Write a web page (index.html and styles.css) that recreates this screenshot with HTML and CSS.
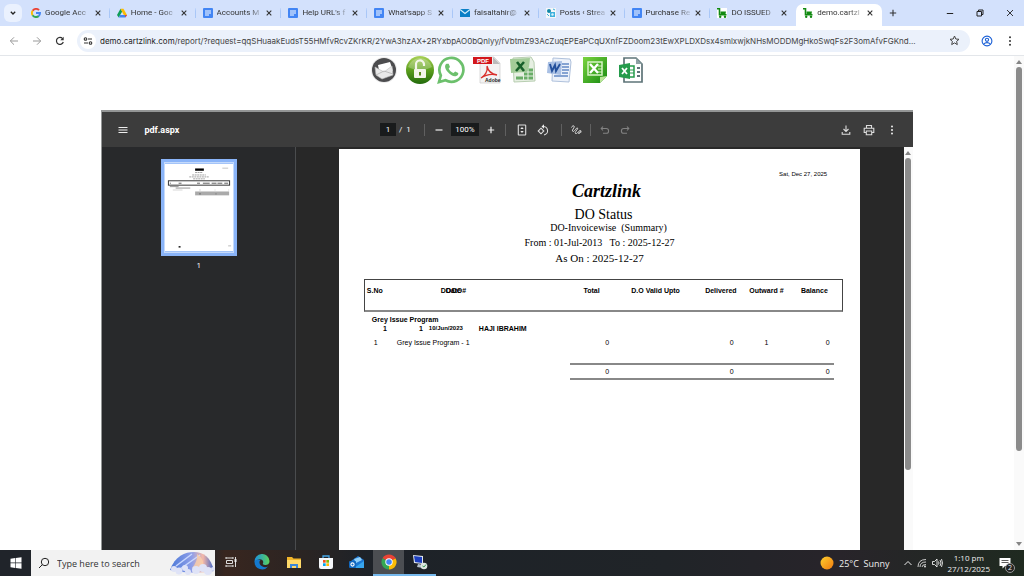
FILE: index.html
```html
<!DOCTYPE html>
<html lang="en">
<head>
<meta charset="utf-8">
<title>demo.cartzlink.com</title>
<link rel="stylesheet" href="styles.css">
</head>
<body>
<svg class="defs" aria-hidden="true">
  <defs>
    <linearGradient id="green" x1="0" y1="0" x2="0" y2="1"><stop offset="0" stop-color="#a9d157"/><stop offset=".5" stop-color="#5d9f1e"/><stop offset="1" stop-color="#226b0c"/></linearGradient>
    <linearGradient id="sheetgreen" x1="0" y1="0" x2="1" y2="1"><stop offset="0" stop-color="#7bd43f"/><stop offset="1" stop-color="#178a12"/></linearGradient>
    <linearGradient id="sky" x1="0" y1="0" x2="1" y2="0"><stop offset="0" stop-color="#4a78d8"/><stop offset=".5" stop-color="#8f9fe8"/><stop offset=".75" stop-color="#f4b8a8"/><stop offset="1" stop-color="#3b62c8"/></linearGradient>
    <linearGradient id="sun" x1="0" y1="0" x2="1" y2="1"><stop offset="0" stop-color="#ffd02e"/><stop offset="1" stop-color="#f07a10"/></linearGradient>
    <linearGradient id="edge" x1="0" y1="0" x2="1" y2="0"><stop offset="0" stop-color="#1b8fdd"/><stop offset="1" stop-color="#5bd35b"/></linearGradient>
    <symbol id="doc" viewBox="0 0 10 10"><rect width="10" height="10" rx="1" fill="#4285f4"/><path d="M2 3h6M2 5h6M2 7h4" stroke="#fff"/></symbol>
    <symbol id="cart" viewBox="0 0 10 10"><path d="M0 .8h2.500v6h7" fill="none" stroke="#128a12" stroke-width="1.600"/><path d="M3.500 3.500h5.500L8.500 6h-5z" fill="#128a12"/><circle cx="3.200" cy="8.800" r="1.200" fill="#128a12"/><circle cx="8" cy="8.800" r="1.200" fill="#128a12"/></symbol>
    <symbol id="x" viewBox="0 0 8 8"><path d="M1.700 1.700l4.600 4.600M6.300 1.700L1.700 6.300" stroke="#333" stroke-width="1.100"/></symbol>
  </defs>
</svg>

<header class="browser">
  <div class="tabstrip">
    <button class="tab-search" aria-label="Search tabs"><svg width="8" height="8" viewBox="0 0 8 8"><path d="M1.800 2.800L4 5l2.200-2.200" fill="none" stroke="#222" stroke-width="1.300"/></svg></button>
    <nav class="tabs" aria-label="Tabs">
      <div class="tab"><svg class="fav" viewBox="0 0 10 10"><g fill="none" stroke-width="1.900"><path d="M1.600 2.800A4 4 0 0 1 8 2.200" stroke="#ea4335"/><path d="M1.600 7.200a4 4 0 0 1 0-4.400" stroke="#fbbc05"/><path d="M7.700 8A4 4 0 0 1 1.600 7.200" stroke="#34a853"/><path d="M5 5h4a4 4 0 0 1-1.400 3.100" stroke="#4285f4"/></g></svg><a href="#" class="label">Google Acc</a><button class="close" aria-label="Close tab"><svg viewBox="0 0 8 8"><use href="#x"/></svg></button></div>
      <div class="tab"><svg class="fav" viewBox="0 0 10 10"><path d="M3.500 .8L0 7l1.700 2.500L5.200 3.600z" fill="#0f9d58"/><path d="M3.500 .8h3L10 7H6.800z" fill="#fbbc05"/><path d="M3.200 7H10L8.400 9.500H1.700z" fill="#4285f4"/><path d="M8 7h2L8.400 9.500z" fill="#ea4335"/></svg><a href="#" class="label">Home - Goc</a><button class="close" aria-label="Close tab"><svg viewBox="0 0 8 8"><use href="#x"/></svg></button></div>
      <div class="tab"><svg class="fav" viewBox="0 0 10 10"><use href="#doc"/></svg><a href="#" class="label">Accounts M</a><button class="close" aria-label="Close tab"><svg viewBox="0 0 8 8"><use href="#x"/></svg></button></div>
      <div class="tab"><svg class="fav" viewBox="0 0 10 10"><use href="#doc"/></svg><a href="#" class="label">Help URL's f</a><button class="close" aria-label="Close tab"><svg viewBox="0 0 8 8"><use href="#x"/></svg></button></div>
      <div class="tab"><svg class="fav" viewBox="0 0 10 10"><use href="#doc"/></svg><a href="#" class="label">What'sapp S</a><button class="close" aria-label="Close tab"><svg viewBox="0 0 8 8"><use href="#x"/></svg></button></div>
      <div class="tab"><svg class="fav" viewBox="0 0 10 10"><rect y="1" width="10" height="8" fill="#0b7fc6"/><path d="M0 1.500l5 4 5-4" fill="none" stroke="#d7f0fb" stroke-width="1.100"/></svg><a href="#" class="label">faisaltahir@</a><button class="close" aria-label="Close tab"><svg viewBox="0 0 8 8"><use href="#x"/></svg></button></div>
      <div class="tab"><svg class="fav" viewBox="0 0 10 10"><rect width="10" height="10" fill="#f4f7f8"/><circle cx="3" cy="3" r="2" fill="#1287a8"/><path d="M4 4h5v5H4z" fill="#3fb0dc"/><path d="M1 6l2 2M7 1l2 1" stroke="#3fb0dc"/><circle cx="6.500" cy="6.500" r="1.200" fill="#d9f2fa"/></svg><a href="#" class="label">Posts ‹ Strea</a><button class="close" aria-label="Close tab"><svg viewBox="0 0 8 8"><use href="#x"/></svg></button></div>
      <div class="tab"><svg class="fav" viewBox="0 0 10 10"><use href="#doc"/></svg><a href="#" class="label">Purchase Re</a><button class="close" aria-label="Close tab"><svg viewBox="0 0 8 8"><use href="#x"/></svg></button></div>
      <div class="tab"><svg class="fav" viewBox="0 0 10 10"><rect width="10" height="10" fill="#fff"/><use href="#cart"/></svg><a href="#" class="label">DO ISSUED</a><button class="close" aria-label="Close tab"><svg viewBox="0 0 8 8"><use href="#x"/></svg></button></div>
      <div class="tab active"><svg class="fav" viewBox="0 0 10 10"><use href="#cart"/></svg><a href="#" class="label" aria-current="page">demo.cartzl</a><button class="close" aria-label="Close tab"><svg viewBox="0 0 8 8"><use href="#x"/></svg></button></div>
    </nav>
    <button class="new-tab" aria-label="New tab"><svg width="8" height="8" viewBox="0 0 8 8"><path d="M4 .8v6.400M.8 4h6.400" stroke="#333" stroke-width="1.100"/></svg></button>
    <div class="window-controls">
      <button aria-label="Minimize"><svg viewBox="0 0 8 8"><path d="M.8 4.500h6.400" stroke="#222"/></svg></button>
      <button aria-label="Restore"><svg viewBox="0 0 8 8"><path d="M1 2.500h4.500V7H1zM2.500 2.500V1H7v4.500H5.500" fill="none" stroke="#222"/></svg></button>
      <button aria-label="Close"><svg viewBox="0 0 8 8"><path d="M1 1l6 6M7 1L1 7" stroke="#222" stroke-width=".9"/></svg></button>
    </div>
  </div>
  <div class="navbar">
    <button aria-label="Back"><svg width="10" height="10" viewBox="0 0 10 10"><path d="M9 5H1.500M5 1.300L1.300 5 5 8.700" fill="none" stroke="#999"/></svg></button>
    <button aria-label="Forward"><svg width="10" height="10" viewBox="0 0 10 10"><path d="M1 5h7.500M5 1.300L8.700 5 5 8.700" fill="none" stroke="#999"/></svg></button>
    <button aria-label="Reload"><svg width="10" height="10" viewBox="0 0 10 10"><path d="M8.300 6A3.500 3.500 0 1 1 7.600 2.600" fill="none" stroke="#333" stroke-width="1.200"/><path d="M8.700.8v3.400H5.300z" fill="#333"/></svg></button>
    <div class="omnibox">
      <button class="site-info" aria-label="Site information"><svg width="10" height="10" viewBox="0 0 10 10"><g fill="none" stroke="#333" stroke-width="1.100"><circle cx="2.500" cy="3" r="1.300"/><path d="M5 3h4M1 7h4"/><circle cx="7.500" cy="7" r="1.300"/></g></svg></button>
      <a href="#" class="url"><span class="domain">demo.cartzlink.com</span>/report/?request=qqSHuaakEudsT55HMfvRcvZKrKR/2YwA3hzAX+2RYxbpAO0bQnlyy/fVbtmZ93AcZuqEPEaPCqUXnfFZDoom23tEwXPLDXDsx4smlxwjkNHsMODDMgHkoSwqFs2F3omAfvFGKnd...</a>
      <button aria-label="Bookmark"><svg width="11" height="11" viewBox="0 0 11 11"><path d="M5.500 1l1.300 3 3.200.3-2.400 2.100.7 3.200-2.800-1.700-2.800 1.700.7-3.200L1 4.300 4.200 4z" fill="none" stroke="#444"/></svg></button>
    </div>
    <button aria-label="Profile"><svg width="12" height="12" viewBox="0 0 12 12"><g fill="none" stroke="#1a5fd6" stroke-width="1.100"><circle cx="6" cy="6" r="4.900"/><circle cx="6" cy="4.800" r="1.600"/><path d="M2.800 9c1.500-1.800 4.900-1.800 6.400 0"/></g></svg></button>
    <button aria-label="Menu"><svg width="10" height="10" viewBox="0 0 10 10"><g fill="#333"><circle cx="5" cy="1.200" r="1"/><circle cx="5" cy="5" r="1"/><circle cx="5" cy="8.800" r="1"/></g></svg></button>
  </div>
</header>

<main class="viewport">
  <div class="page">
    <div class="actions">
      <button aria-label="Email"><svg viewBox="0 0 28 28"><circle cx="14" cy="14" r="13" fill="#ececec"/><circle cx="14" cy="14" r="12" fill="#4c4c4e"/><path d="M8 9l12-3 3 9-13 5z" fill="#fff"/><path d="M5 11l9 5 8-6 1 9-11 4-6-4z" fill="#e9e9e9" stroke="#bbb" stroke-width=".6"/><path d="M6 19l8-4 9 3" fill="none" stroke="#aaa" stroke-width=".7"/></svg></button>
      <div class="pair">
        <button aria-label="Unlock"><svg viewBox="0 0 28 28"><circle cx="14" cy="14" r="14" fill="url(#green)"/><path d="M2 11a12.500 12.500 0 0 1 24 0c-7 4-17 4-24 0z" fill="#fff" opacity=".25"/><path d="M10 14V9a4 4 0 0 1 8-1v2" fill="none" stroke="#f3f6ea" stroke-width="2.200"/><rect x="8" y="13" width="12" height="9" rx="1" fill="#f3f6ea"/><path d="M14 16v3.500" stroke="#5a8c1a" stroke-width="2"/></svg></button>
        <button aria-label="WhatsApp"><svg viewBox="0 0 28 28"><path d="M2 26l1.800-6.500A12 12 0 1 1 8.500 24.300z" fill="#fff" stroke="#6cc06c" stroke-width="2.700"/><path d="M9.500 7.800c-2 1.500-2 4.200.8 7.700 3 3.700 6.500 5.400 8.900 4.600 1.800-.6 2.300-2 2-3.200l-3-1.500-1.700 1.700c-2.200-.8-4-2.600-4.800-4.600l1.300-1.500-1.300-3.200z" fill="#6cc06c"/></svg></button>
      </div>
      <button aria-label="Export to PDF"><svg viewBox="0 0 28 28"><path d="M7 1h14l6 6v20H7z" fill="#f3f3f3" stroke="#ccc" stroke-width=".7"/><path d="M20 1v7h7z" fill="#bbb"/><rect x="0" y="1" width="19" height="7" fill="#d3171c"/><text class="pdf-tag" x="4" y="7">PDF</text><path d="M8 22c4-2 7-7 6-12 1 5 4 8 10 9-6-1.500-11-.5-16 3z" fill="none" stroke="#d9302c" stroke-width="1.300"/><text class="adobe-tag" x="12" y="26">Adobe</text></svg></button>
      <button aria-label="Export to Excel"><svg viewBox="0 0 28 28"><path d="M4 2l18-1 3 5 1 19-21 1z" fill="#e6efe2" stroke="#b8ceb1"/><path d="M15 14h9M15 18h9M15 22h9M7 22h7" stroke="#69ad67" stroke-width="2.800"/><path d="M19 13v11" stroke="#e6efe2"/><path d="M1 3l20-1-1 9-3 5-15 1z" fill="#a3cc98"/><path d="M8 6l7 9M15 6l-8 9" stroke="#17602a" stroke-width="2.600"/></svg></button>
      <button aria-label="Export to Word"><svg viewBox="0 0 28 28"><path d="M8 2l17 1 1 3-2 20-17-1z" fill="#edf2fa" stroke="#afc1dc"/><path d="M17 8h7M17 11h7M17 14h7M17 17h6M9 20h14" stroke="#6389c5" stroke-width="1.500"/><path d="M3 6l14-1-1 14-14-2z" fill="#a9c0e4"/><path d="M5 8l2 7 3-6 1 6 4-7" fill="none" stroke="#23509c" stroke-width="1.900"/></svg></button>
      <button aria-label="Export to Excel workbook"><svg viewBox="0 0 28 28"><path d="M2 1h24v19l-7 7H2z" fill="url(#sheetgreen)"/><path d="M19 27v-6l7-1z" fill="#b9e697"/><rect x="7" y="6" width="14" height="13" fill="none" stroke="#d8f4c6" stroke-width="1.500"/><path d="M9 8l8 9M17 8l-8 9" stroke="#fff" stroke-width="2.300"/><path d="M17 10h4M17 13h4M17 16h4" stroke="#d8f4c6"/></svg></button>
      <button aria-label="Export to spreadsheet"><svg viewBox="0 0 28 28"><path d="M7 2h12l6 6v18H7z" fill="#fff" stroke="#5e7478" stroke-width="1.700"/><path d="M19 2v6h6z" fill="#8fa3a6"/><path d="M20 12h3M20 16h3M20 20h3" stroke="#5e7478" stroke-width="2"/><path d="M12 10h5v11h-5" fill="#fff" stroke="#249b4b" stroke-width="1.500"/><path d="M12 14h5M12 17h5" stroke="#249b4b"/><path d="M2 9l11-2v16L2 21z" fill="#249b4b"/><path d="M5 12l5 6M10 12l-5 6" stroke="#fff" stroke-width="1.800"/></svg></button>
    </div>

    <section class="viewer" aria-label="PDF viewer">
      <div class="pdfbar">
        <div class="pdfbar-left">
          <button aria-label="Toggle sidebar"><svg width="10" height="10" viewBox="0 0 10 10"><path d="M.5 2.500h9M.5 5h9M.5 7.500h9" stroke="#eee"/></svg></button>
          <span class="filename">pdf.aspx</span>
        </div>
        <div class="pdfbar-mid">
          <input class="page-no" aria-label="Page number" value="1"><span class="page-total">/&nbsp; 1</span>
          <span class="rule"></span>
          <div class="zoom">
            <button aria-label="Zoom out"><svg width="8" height="8" viewBox="0 0 8 8"><path d="M.5 4h7" stroke="#eee" stroke-width="1.200"/></svg></button>
            <input class="zoom-level" aria-label="Zoom level" value="100%">
            <button aria-label="Zoom in"><svg width="8" height="8" viewBox="0 0 8 8"><path d="M.8 4h6.400M4 .8v6.400" stroke="#eee" stroke-width="1.200"/></svg></button>
          </div>
          <span class="rule"></span>
          <div class="fit">
            <button aria-label="Fit to page"><svg width="10" height="12" viewBox="0 0 10 12"><rect x="1.300" y="1" width="7.400" height="10" rx=".6" fill="none" stroke="#ddd" stroke-width="1.100"/><path d="M3.300 5L5 3l1.700 2zM3.300 7L5 9l1.700-2z" fill="#eee"/></svg></button>
            <button aria-label="Rotate"><svg width="12" height="12" viewBox="0 0 12 12"><path d="M4 4.200L6.800 7 4 9.800 1.200 7z" fill="none" stroke="#ddd" stroke-width="1.100"/><path d="M5.500 2.500a4.300 4.300 0 1 1 1.500 8.500" fill="none" stroke="#ddd" stroke-width="1.100"/><path d="M7 .3v4.400L4.500 2.500z" fill="#eee"/></svg></button>
          </div>
          <span class="rule"></span>
          <button aria-label="Draw"><svg width="12" height="12" viewBox="0 0 12 12"><path d="M1.500 3.500C2.500 1 5 1.500 4 3.500S1.500 7 3 7.500 6.500 3 7.500 4 4 8.500 5.500 9.500 9 6 10.500 6.500 9.500 10 8.500 9.500 10 7.500 11.300 8" fill="none" stroke="#ddd"/></svg></button>
          <span class="rule"></span>
          <button aria-label="Undo"><svg width="10" height="10" viewBox="0 0 10 10"><path d="M3 1.500L1.200 3.500 3 5.500M1.500 3.500h4.700a2.400 2.400 0 0 1 0 4.800H3" fill="none" stroke="#828282" stroke-width="1.100"/></svg></button>
          <button aria-label="Redo"><svg width="10" height="10" viewBox="0 0 10 10"><path d="M7 1.500l1.800 2L7 5.500M8.500 3.500H3.800a2.400 2.400 0 0 0 0 4.800H7" fill="none" stroke="#828282" stroke-width="1.100"/></svg></button>
        </div>
        <div class="pdfbar-right">
          <button aria-label="Download"><svg width="10" height="10" viewBox="0 0 10 10"><path d="M5 .5v6M2.500 4L5 6.500 7.500 4M1.200 7v2.200h7.600V7" fill="none" stroke="#ddd" stroke-width="1.100"/></svg></button>
          <button aria-label="Print"><svg width="12" height="12" viewBox="0 0 12 12"><path d="M3.500 4V1.500h5V4M3 8.500H1.200V4.300h9.600v4.200H9M3.300 7h5.400v3.700H3.300z" fill="none" stroke="#ddd" stroke-width="1.100"/></svg></button>
          <button aria-label="More"><svg width="10" height="10" viewBox="0 0 10 10"><g fill="#eee"><circle cx="5" cy="1.500" r="1"/><circle cx="5" cy="5" r="1"/><circle cx="5" cy="8.500" r="1"/></g></svg></button>
        </div>
      </div>
      <div class="pdfbody">
        <aside class="sidebar">
          <a href="#" class="thumb" aria-label="Page 1"><svg viewBox="0 0 70 90"><rect width="70" height="90" fill="#fff"/><path d="M31 6h9" stroke="#000" stroke-width="2.400"/><path d="M31 9h8M28 11.500h14M25 13.500h20M29 15.500h12" stroke="#888" stroke-width=".8" stroke-dasharray="2 .6"/><path d="M59 4.500h6" stroke="#aaa" stroke-width=".7"/><rect x="3.500" y="17.500" width="63" height="4.500" fill="#fff" stroke="#333"/><path d="M5 20h1M14 20h3M33 20h3M39 20h7M48 20h5M54 20h5M61 20h4" stroke="#333" stroke-width=".8"/><path d="M5 23.500h9M11 25h15" stroke="#777" stroke-width=".8"/><path d="M8 27h10M35 27h2M51 27h1M65 27h1" stroke="#bbb" stroke-width=".6"/><rect x="31" y="28.500" width="35" height="4" fill="#aaa"/><path d="M35 31h2M52 31h1" stroke="#444" stroke-width=".6"/><path d="M14 85.500h2" stroke="#111" stroke-width="1.500"/><path d="M65 84.500h3" stroke="#aaa" stroke-width=".8"/></svg></a>
          <span class="thumb-no">1</span>
        </aside>
        <div class="canvas">
          <article class="sheet">
            <p class="date">Sat, Dec 27, 2025</p>
            <div class="heading">
              <p class="brand">Cartzlink</p>
              <h1>DO Status</h1>
              <p class="subtitle">DO-Invoicewise&nbsp; (Summary)</p>
              <p class="range">From : 01-Jul-2013 &nbsp; To : 2025-12-27</p>
              <p class="as-on">As On : 2025-12-27</p>
            </div>
            <table class="report">
              <colgroup><col class="c-no"><col class="c-name"><col class="c-total"><col class="c-upto"><col class="c-deliv"><col class="c-out"><col class="c-bal"><col class="c-end"></colgroup>
              <thead>
                <tr><th class="left">S.No</th><th class="left"><span class="stack"><span class="layer">DO</span><span class="layer second">Date</span><span class="layer third">DO#</span></span></th><th>Total</th><th class="upto">D.O Valid Upto</th><th>Delivered</th><th>Outward #</th><th>Balance</th><th></th></tr>
              </thead>
              <tbody>
                <tr class="group"><th colspan="8">Grey Issue Program</th></tr>
                <tr class="party"><th colspan="8"><div class="party-line"><span>1</span><span>1</span><span class="small">10/Jun/2023</span><span class="party-name">HAJI IBRAHIM</span></div></th></tr>
                <tr class="item"><td>1</td><td class="item-name">Grey Issue Program - 1</td><td class="num">0</td><td></td><td class="num">0</td><td>1</td><td class="num">0</td><td></td></tr>
              </tbody>
              <tfoot>
                <tr><td></td><td></td><td class="sum">0</td><td class="sum"></td><td class="sum">0</td><td class="sum"></td><td class="sum">0</td><td></td></tr>
              </tfoot>
            </table>
          </article>
        </div>
        <div class="scrollbar inner"><span class="arrow up"></span><span class="handle"></span></div>
      </div>
    </section>
  </div>
  <div class="scrollbar outer"><span class="arrow up"></span><span class="handle"></span><span class="arrow down"></span></div>
</main>

<footer class="taskbar">
  <button class="start" aria-label="Start"><svg width="12" height="12" viewBox="0 0 12 12"><path d="M.5 1.700l4.700-.6v4.500H.5zM5.800 1L11.500.3v5.300H5.800zM.5 6.300h4.700v4.600l-4.700-.6zM5.800 6.300h5.700v5.400L5.800 11z" fill="#fff"/></svg></button>
  <label class="search">
    <svg width="12" height="12" viewBox="0 0 12 12"><circle cx="7" cy="5" r="3.700" fill="none" stroke="#222"/><path d="M4.300 7.700L1 11" stroke="#222"/></svg>
    <input type="text" placeholder="Type here to search" aria-label="Type here to search">
    <svg class="scene" viewBox="0 0 45 24"><path d="M0 19C5 5 15 1 24 1s17 5 20 19q-22 4-44-1z" fill="url(#sky)"/><path d="M6 15L22 3M10 18L30 4" stroke="#c9d8ff" stroke-width="1.500"/><path d="M27 3q8 5 6 14H22q6-7 5-14z" fill="#fbd0a8" opacity=".8"/><g fill="#dfe3f7"><circle cx="4" cy="18" r="3"/><circle cx="9" cy="20" r="3.500"/><circle cx="15" cy="17" r="3"/><circle cx="18" cy="21" r="3"/><circle cx="26" cy="19" r="4"/><circle cx="33" cy="17" r="4"/><circle cx="38" cy="20" r="4"/><circle cx="43" cy="18" r="2"/></g></svg>
  </label>
  <nav class="apps" aria-label="Applications">
    <button aria-label="Task view"><svg viewBox="0 0 16 16"><path d="M3 4h7M3 12h7M3.500 6.500h6v3h-6zM3 3v2M10 3v2M3 11v2M10 11v2M12.500 3v10" fill="none" stroke="#ddd"/><rect x="11.500" y="5" width="2" height="3" fill="#eee"/></svg></button>
    <button aria-label="Edge"><svg viewBox="0 0 16 16"><path d="M.5 8a7.500 7.500 0 0 1 15-1c0 3-2 4-4.500 4-2 0-2.500-1-2-1.800C10 7 8 5 5.500 5.200 3 5.500 1 7 .5 8z" fill="url(#edge)"/><path d="M.5 8C1 6 4 4.500 6.500 6 4 8 6 13 11 13.200q2 0 3-.8A7.500 7.500 0 0 1 .5 8z" fill="#1479cf"/></svg></button>
    <button aria-label="File Explorer"><svg viewBox="0 0 16 16"><path d="M1 3h5l1.500 1.500H15V14H1z" fill="#f2b52a"/><rect x="1" y="6" width="14" height="8" fill="#ffd969"/><path d="M4 14v-4h8v4h-2v-2H6v2z" fill="#3b86d8"/></svg></button>
    <button aria-label="Store"><svg viewBox="0 0 16 16"><path d="M5 5V2h6v3" fill="none" stroke="#46a6e6" stroke-width="1.300"/><path d="M1 4h14v9q0 2-2 2H3q-2 0-2-2z" fill="#f5f8fb"/><path d="M5 6h2.700v2.700H5z" fill="#f25022"/><path d="M8.300 6H11v2.700H8.300z" fill="#7fba00"/><path d="M5 9.300h2.700V12H5z" fill="#00a4ef"/><path d="M8.300 9.300H11V12H8.300z" fill="#ffb900"/></svg></button>
    <button aria-label="Outlook"><svg viewBox="0 0 16 16"><path d="M2 7l7-5 6 4v8H3z" fill="#1b76d2"/><path d="M5 5l6-2 2 3-6 3z" fill="#8fd0fa"/><path d="M5 14l10-7v7z" fill="#37a5ee"/><rect y="7" width="7" height="7" rx="1" fill="#1267bd"/><circle cx="3.500" cy="10.500" r="1.600" fill="none" stroke="#fff" stroke-width="1.100"/></svg></button>
    <button class="running current" aria-label="Chrome"><svg viewBox="0 0 16 16"><path d="M8 8L1.500 4.200a7.500 7.500 0 0 1 13 0z" fill="#ea4335"/><path d="M8 8l6.500-3.800A7.500 7.500 0 0 1 8 15.500z" fill="#fbbc05"/><path d="M8 8v7.500A7.500 7.500 0 0 1 1.500 4.200z" fill="#34a853"/><path d="M8 4.200h6.500" stroke="#ea4335"/><circle cx="8" cy="8" r="3.700" fill="#fff"/><circle cx="8" cy="8" r="2.800" fill="#4285f4"/></svg></button>
    <button class="running" aria-label="Remote Desktop"><svg viewBox="0 0 16 16"><path d="M1 1l10 1v8L2 9z" fill="#dfe6ef"/><path d="M2 2l8 1v6L3 8z" fill="#1c3fbf"/><path d="M6 10l5 1v3l-6-1z" fill="#b8c2cc"/><circle cx="12" cy="12" r="3.300" fill="#dfe6e2"/><path d="M10.500 12l1.500 1 2-2.500" fill="none" stroke="#3b9b57"/></svg></button>
  </nav>
  <div class="tray">
    <button class="weather"><svg width="14" height="14" viewBox="0 0 14 14"><circle cx="7" cy="7" r="6.500" fill="url(#sun)"/></svg><span>25°C&nbsp; Sunny</span></button>
    <button aria-label="Show hidden icons"><svg width="8" height="8" viewBox="0 0 8 8"><path d="M.5 6L4 2.500 7.500 6" fill="none" stroke="#eee"/></svg></button>
    <button aria-label="Network"><svg width="10" height="10" viewBox="0 0 10 10"><g fill="none" stroke="#ddd" stroke-width=".9"><path d="M1 9Q1 1.500 9 1.500M3 9q0-5 6-5M5 9q0-2.500 4-2.500"/></g><circle cx="8" cy="8.500" r="1" fill="#ddd"/></svg></button>
    <button aria-label="Volume"><svg width="11" height="10" viewBox="0 0 11 10"><path d="M.5 3.500h2L5 1v8L2.500 6.500h-2zM6.500 3.500q1 1.500 0 3M8 2q2 3 0 6M9.500 1q2 4 0 8" fill="none" stroke="#eee" stroke-width=".9"/></svg></button>
    <button class="clock"><span>1:10 pm</span><span>27/12/2025</span></button>
    <button class="notices" aria-label="2 notifications"><svg width="12" height="12" viewBox="0 0 12 12"><path d="M.5 1h11v8H6L3.500 11.500V9h-3z" fill="#fff"/><path d="M2.500 3.500h7M2.500 5.500h7" stroke="#333" stroke-width=".8"/></svg><span class="badge">2</span></button>
  </div>
</footer>
</body>
</html>
```
FILE: styles.css
```css
* { box-sizing: border-box; }

body {
  margin: 0;
  height: 100vh;
  display: flex;
  flex-direction: column;
  overflow: hidden;
  background: #fff;
  color: #222;
  font-family: "Open Sans", "Noto Sans", sans-serif;
  font-size: 8px;
}

button, input {
  margin: 0;
  padding: 0;
  border: 0;
  background: none;
  color: inherit;
  font: inherit;
  min-width: 0;
}

button {
  flex: none;
  display: flex;
  align-items: center;
  justify-content: center;
}

a { color: inherit; text-decoration: none; }
p, h1 { margin: 0; font-weight: normal; }
.defs { position: absolute; width: 0; height: 0; }

/* Browser frame */
.tabstrip {
  display: flex;
  align-items: center;
  height: 26px;
  padding-left: 4px;
  background: #d3e1fc;
}

.tab-search {
  width: 18px;
  height: 18px;
  border-radius: 6px;
  background: #eaf1fe;
}

.tabs {
  flex: 1;
  min-width: 0;
  display: flex;
  align-self: stretch;
  padding: 4px 0 0 2px;
}

.tab {
  flex: 1 1 0;
  min-width: 0;
  display: flex;
  align-items: center;
  gap: 4px;
  padding: 0 8px 4px 7px;
  border-radius: 7px 7px 0 0;
  background: linear-gradient(#a9c7f7, #a9c7f7) right 4px / 1px 10px no-repeat;
}

.tab:nth-last-child(2) { background: none; }
.tab.active { background: #fff; }
.fav { flex: none; width: 10px; height: 10px; }

.label {
  flex: 1;
  min-width: 0;
  overflow: hidden;
  white-space: nowrap;
  line-height: 14px;
  color: #333;
  font-family: Roboto, "Open Sans", sans-serif;
  mask-image: linear-gradient(to right, #000 70%, rgba(0, 0, 0, .2));
}

.close { width: 8px; height: 8px; }
.close svg { width: 8px; height: 8px; }
.new-tab { width: 22px; height: 18px; }

.window-controls {
  display: flex;
  gap: 14px;
  padding: 0 6px 0 38px;
}

.window-controls button { width: 16px; height: 16px; }
.window-controls svg { width: 8px; height: 8px; }

.navbar {
  display: flex;
  align-items: center;
  gap: 3px;
  height: 30px;
  padding: 0 4px;
  border-bottom: 1px solid #e3e6ea;
}

.navbar button { width: 20px; height: 20px; }

.omnibox {
  flex: 1;
  min-width: 0;
  display: flex;
  align-items: center;
  gap: 4px;
  margin: 0 4px;
  padding: 0 6px 0 3px;
  height: 22px;
  border-radius: 11px;
  background: #ebf1fb;
}

.omnibox .site-info {
  width: 16px;
  height: 16px;
  border-radius: 8px;
  background: #fff;
}

.url {
  flex: 1;
  min-width: 0;
  overflow: hidden;
  white-space: nowrap;
  font-family: Inter, "Open Sans", sans-serif;
  font-size: 8px;
  line-height: 16px;
  color: #444;
}

.domain { color: #222; }

/* Page area */
.viewport { flex: 1; min-height: 0; display: flex; }

.page {
  flex: 1;
  min-width: 0;
  display: flex;
  flex-direction: column;
  align-items: center;
}

.actions, .pair { display: flex; }
.actions { gap: 8px; padding-bottom: 26px; }
.pair { gap: 3px; }
.actions svg { width: 28px; height: 28px; display: block; }
.pdf-tag { font: bold 6px "Liberation Sans", sans-serif; fill: #fff; }
.adobe-tag { font: bold 5px "Liberation Sans", sans-serif; fill: #222; }

.viewer {
  flex: 1;
  min-height: 0;
  width: 80%;
  display: flex;
  flex-direction: column;
  border-top: 2px solid #949696;
  border-left: 1px solid #949696;
  background: #282828;
}

.pdfbar {
  display: grid;
  grid-template-columns: 1fr auto 1fr;
  align-items: center;
  height: 35px;
  background: #3c3c3c;
  color: #fff;
  font-family: Roboto, "Open Sans", sans-serif;
}

.pdfbar button { width: 20px; height: 20px; }
.pdfbar-left, .pdfbar-mid, .pdfbar-right, .zoom, .fit { display: flex; align-items: center; }
.pdfbar-left { gap: 11px; padding-left: 11px; }
.pdfbar-right { gap: 3px; padding-right: 11px; justify-content: flex-end; }
.filename { font-size: 9px; font-weight: bold; }

.page-no, .zoom-level {
  height: 13px;
  background: #191b1c;
  text-align: center;
}

.page-no { width: 16px; }
.page-total { width: 24px; padding-left: 3px; white-space: nowrap; }
.zoom-level { width: 28px; }
.zoom { gap: 2px; }
.fit { gap: 1px; padding: 0 4px 0 2px; }
.rule { width: 1px; height: 12px; margin: 0 4px; background: #606060; }

.pdfbody { flex: 1; min-height: 0; display: flex; }

.sidebar {
  flex: none;
  width: 194px;
  display: flex;
  flex-direction: column;
  align-items: center;
  padding-top: 12px;
  border-right: 1px solid #4a4c4e;
  background: #28292b;
}

.thumb {
  display: block;
  border: 3px solid #8ab4f8;
  background: #8ab4f8;
}

.thumb svg { display: block; width: 70px; height: 91px; border: 1px solid #c5dafb; }
.thumb-no { margin-top: 3px; line-height: 12px; color: #fff; }

.canvas { flex: 1; min-width: 0; padding: 2px 1px 0 0; overflow: hidden; }

.sheet {
  width: 86%;
  min-height: 100%;
  margin: 0 auto;
  padding: 20px 17px 0 25px;
  background: #fff;
  color: #000;
  font-family: "Liberation Sans", Arial, sans-serif;
  font-size: 7px;
}

.date {
  padding-right: 16px;
  text-align: right;
  font-size: 6px;
  line-height: 10px;
}

.heading {
  padding-right: 8px;
  text-align: center;
  font-family: "Liberation Serif", "Times New Roman", serif;
  font-size: 10px;
}

.brand {
  padding-left: 14px;
  font-family: "Monotype Corsiva", "Liberation Serif", serif;
  font-size: 18px;
  font-weight: bold;
  font-style: italic;
  line-height: 24px;
}

.heading h1 { padding-left: 8px; font-size: 14px; line-height: 14px; margin-top: 5px; }
.subtitle { padding-left: 18px; line-height: 12px; }
.range { line-height: 18px; }
.as-on { font-size: 11px; line-height: 12px; }

.report {
  width: 100%;
  margin-top: 15px;
  border-collapse: separate;
  border-spacing: 0;
  table-layout: fixed;
}

.c-no { width: 5%; }
.c-name { width: 38%; }
.c-total { width: 9%; }
.c-upto { width: 19%; }
.c-deliv { width: 7%; }
.c-out { width: 12%; }
.c-bal { width: 8%; }
.c-end { width: 2%; }

.report th, .report td { padding: 0; white-space: nowrap; text-align: center; }

.report thead th {
  height: 33px;
  padding-top: 7px;
  vertical-align: top;
  line-height: 8px;
  border-top: 1px solid #444;
  border-bottom: 2px solid #888;
}

.report thead th:first-child { border-left: 1px solid #444; padding-left: 2px; }
.report thead th:last-child { border-right: 1px solid #444; }
.report .left { text-align: left; }
.report .upto { padding-right: 6px; }

.stack { display: block; position: relative; height: 8px; margin-left: 53px; }
.layer { position: absolute; left: 0; top: 0; }
.second { left: 5px; }
.third { left: 11px; }

.report .group th { padding: 3px 0 0 8px; text-align: left; line-height: 9px; }
.report .party th { line-height: 9px; }
.party-line {
  display: grid;
  grid-template-columns: 23px 36px 40px auto;
  text-align: right;
}
.party-line .small { font-size: 6px; }
.party-line .party-name { padding-left: 16px; text-align: left; }

.report .item td { height: 30px; padding-top: 5px; vertical-align: top; line-height: 10px; }
.report .item .item-name { padding-left: 9px; text-align: left; }
.report .item .num { padding-right: 4px; text-align: right; }

.report .sum {
  height: 17px;
  padding-right: 4px;
  text-align: right;
  border-top: 2px solid #888;
  border-bottom: 2px solid #888;
}

/* Scrollbars */
.scrollbar {
  flex: none;
  display: flex;
  flex-direction: column;
  align-items: center;
  width: 10px;
  padding: 4px 0;
  background: #fafafa;
}

.scrollbar.inner { width: 9px; }
.handle { width: 6px; border-radius: 3px; background: #8b8b8b; margin-top: 3px; }
.inner .handle { height: 79%; }
.outer .handle { height: 79%; }
.arrow { border: 3px solid transparent; }
.up { border-top: 0; border-bottom: 4px solid #858585; }
.down { border-bottom: 0; border-top: 4px solid #858585; margin-top: auto; }

/* Taskbar */
.taskbar {
  display: flex;
  height: 26px;
  background: linear-gradient(to right, #20242a 0, #20242a 20%, #38261f 22%, #2a2423 30%, #1d2228 36%, #202428 65%, #28242a 82%, #1f2a20);
  color: #eee;
}

.start { width: 31px; }

.search {
  display: flex;
  align-items: center;
  gap: 7px;
  width: 184px;
  padding-left: 7px;
  background: #f2f2f2;
  color: #333;
  font-size: 9px;
}

.search input { flex: 1; }
.search input::placeholder { color: #333; opacity: 1; }
.scene { width: 45px; height: 24px; }

.apps { display: flex; width: 221px; }
.apps button { flex: 1; border-bottom: 2px solid transparent; }
.apps .running { border-bottom-color: #76b9ed; }
.apps .current { background: #4b4e52; }
.apps svg { width: 16px; height: 16px; }

.tray { display: flex; margin-left: auto; gap: 5px; padding-right: 9px; }
.weather { gap: 5px; padding-right: 9px; font-size: 9px; }
.clock { flex-direction: column; font-size: 8px; line-height: 11px; }
.notices { position: relative; width: 20px; }
.badge {
  position: absolute;
  right: 0;
  bottom: 3px;
  width: 10px;
  height: 10px;
  border: 1px solid #999;
  border-radius: 5px;
  background: #222;
  font-size: 7px;
  line-height: 8px;
}
```
